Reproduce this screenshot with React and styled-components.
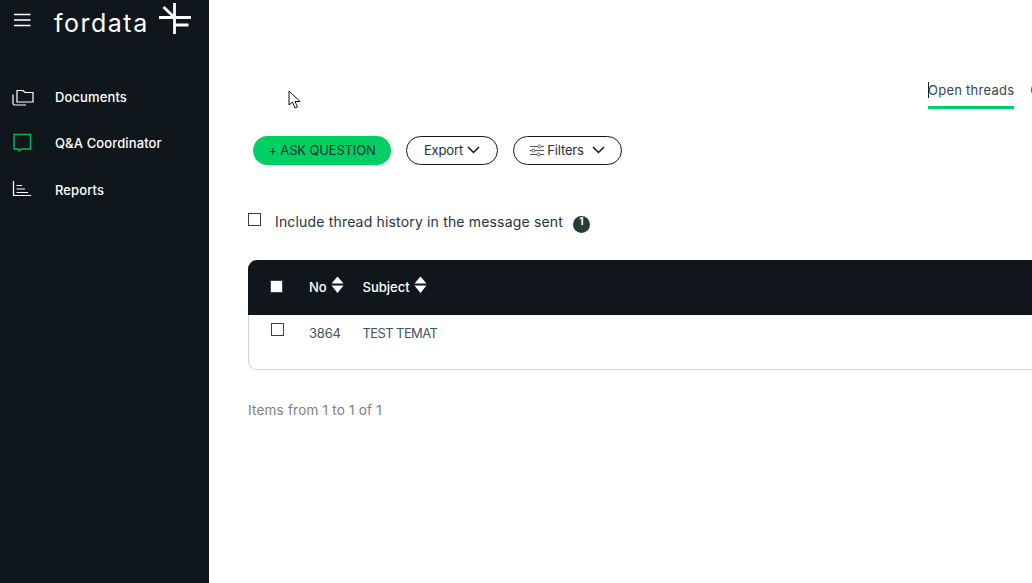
import React from 'react';
import styled, { createGlobalStyle } from 'styled-components';

const GlobalStyle = createGlobalStyle`
  html, body {
    margin: 0;
    padding: 0;
    height: 100%;
    overflow: hidden;
    background: #fff;
    font-family: Inter, "Liberation Sans", sans-serif;
  }
`;

const Page = styled.div`
  position: relative;
  display: flex;
  width: 1032px;
  height: 583px;
  overflow: hidden;
`;

const Sidebar = styled.aside`
  flex: 0 0 209px;
  background: #10171c;
  color: #fff;
`;

const Brand = styled.div`
  display: flex;
  align-items: center;
  height: 36px;
  padding: 4px 0 0 14px;
`;

const Burger = styled.svg`
  width: 17px;
  height: 14px;
  margin-top: -4px;
  margin-right: 23px;
`;

const LogoText = styled.span`
  width: 96px;
  margin-top: 2px;
  font-size: 25px;
  font-weight: 400;
  letter-spacing: 1.5px;
  line-height: 36px;
`;

const LogoMark = styled.svg`
  width: 32px;
  height: 32px;
  margin-left: 9px;
  margin-top: -8px;
`;

const Nav = styled.nav`
  display: flex;
  flex-direction: column;
  gap: 22.5px;
  padding-top: 44.7px;
`;

const NavItem = styled.a`
  display: flex;
  align-items: center;
  height: 24px;
  padding-left: 12px;
  font-size: 13px;
  font-weight: 500;
  letter-spacing: 0.12px;
  color: #fff;
`;

const NavIcon = styled.svg`
  width: 22px;
  height: 20px;
  margin-right: 21px;
  fill: none;
  stroke: ${props => props.$color || '#fff'};
  stroke-width: ${props => props.$stroke || 1.2};
`;

const Main = styled.main`
  flex: 1;
  min-width: 0;
  padding: 78px 0 0 39px;
  color: #1f2a30;
`;

const Tabs = styled.div`
  display: flex;
  gap: 16px;
  padding-left: 680px;
  white-space: nowrap;
`;

const Tab = styled.div`
  height: 31px;
  box-sizing: border-box;
  padding-top: 4px;
  font-size: 13px;
  letter-spacing: 0.25px;
  color: #33464f;
  border-bottom: ${props => (props.$active ? '3px solid #00cf63' : 'none')};
`;

const Caret = styled.span`
  position: absolute;
  left: 928px;
  top: 82px;
  width: 1px;
  height: 16px;
  background: #10262c;
`;

const Toolbar = styled.div`
  display: flex;
  align-items: center;
  gap: 15px;
  padding: 27px 0 0 5px;
`;

const AskButton = styled.button`
  width: 138px;
  height: 29px;
  border: 0;
  border-radius: 15px;
  padding: 0 0 2px;
  background: #00cf63;
  color: #14302a;
  font-family: inherit;
  font-size: 13px;
  letter-spacing: -0.15px;
`;

const OutlineButton = styled.button`
  display: flex;
  align-items: center;
  justify-content: center;
  gap: ${props => props.$gap || 4}px;
  width: ${props => props.$width}px;
  height: 29px;
  padding: 0 0 1px;
  border: 1px solid #10171c;
  border-radius: 15px;
  background: #fff;
  color: #22323a;
  font-family: inherit;
  font-size: 13px;
  letter-spacing: -0.15px;
`;

const FilterLabel = styled.span`
  display: flex;
  align-items: center;
  gap: 3px;
`;

const HistoryRow = styled.label`
  display: flex;
  align-items: center;
  height: 20px;
  margin-top: 46px;
  font-size: 14px;
  letter-spacing: 0.17px;
  color: #26343b;
`;

const Check = styled.span`
  display: block;
  flex: none;
  box-sizing: border-box;
  width: 13px;
  height: 13px;
  border: 1px solid #3a3f42;
  background: ${props => (props.$filled ? '#fff' : 'transparent')};
  margin-top: ${props => props.$top || 0}px;
`;

const HistoryLabel = styled.span`
  margin-left: 14px;
`;

const InfoDot = styled.span`
  display: flex;
  justify-content: center;
  width: 17px;
  height: 17px;
  margin: 6px 0 0 10px;
  border-radius: 50%;
  background: #233d39;
  color: #fff;
  font-size: 10px;
  font-weight: 700;
  line-height: 11px;
`;

const Table = styled.div`
  width: 900px;
  margin-top: 29px;
`;

const HeadRow = styled.div`
  display: flex;
  align-items: center;
  box-sizing: border-box;
  height: 55px;
  padding: 0 0 2px 22px;
  border-radius: 9px 9px 0 0;
  background: #10171c;
  color: #fff;
  font-size: 13px;
  font-weight: 500;
  letter-spacing: 0;
`;

const BodyRow = styled.div`
  display: flex;
  align-items: flex-start;
  box-sizing: border-box;
  height: 55px;
  padding: 8px 0 0 22px;
  border: 1px solid #cfd4d8;
  border-top: 0;
  border-radius: 0 0 9px 9px;
  font-size: 13px;
  letter-spacing: -0.2px;
  color: #45545c;
`;

const Cell = styled.div`
  display: flex;
  align-items: center;
  gap: 4px;
  width: ${props => props.$width}px;
  line-height: 20px;
  letter-spacing: ${props => props.$spacing || 'inherit'};
`;

const SortIcon = styled.svg`
  width: 13px;
  height: 18px;
  margin-top: -3px;
  fill: #fff;
`;

const Footer = styled.div`
  margin-top: 32px;
  font-size: 13.500px;
  letter-spacing: 0.2px;
  color: #808080;
`;

const Cursor = styled.svg`
  position: absolute;
  left: 288px;
  top: 90px;
  width: 14px;
  height: 20px;
`;

const Chevron = ({ size = 13 }) => (
  <svg width={size} height={size * 0.62} viewBox="0 0 13 8" fill="none" stroke="#10171c" strokeWidth="1.5">
    <path d="M1 1l5.500 5.500L12 1" />
  </svg>
);

const Sort = () => (
  <SortIcon viewBox="0 0 13 18">
    <path d="M6.500 0.500L12.500 7.500H.5zM.5 9.500h12L6.500 17z" />
  </SortIcon>
);

const App = () => (
  <Page>
    <GlobalStyle />
    <Sidebar>
      <Brand>
        <Burger viewBox="0 0 17 14" fill="none" stroke="#fff" strokeWidth="1.3">
          <path d="M0 1.500h16.500M0 7h16.500M0 12.500h16.500" />
        </Burger>
        <LogoText>fordata</LogoText>
        <LogoMark viewBox="0 0 32 32" fill="none" stroke="#fff" strokeWidth="2.800">
          <path d="M15.500 1v31M0 15.500h32M15.500 23h14M4.500 5l11 10.500" />
        </LogoMark>
      </Brand>
      <Nav>
        <NavItem>
          <NavIcon viewBox="0 0 22 20">
            <path d="M5 15V3.500h6l2 2h8V15H5z" />
            <path d="M1 7.500v9c0 1 .6 1.500 1.500 1.500H14" />
          </NavIcon>
          Documents
        </NavItem>
        <NavItem>
          <NavIcon viewBox="0 0 22 20" $color="#00b956" $stroke={1.4}>
            <path d="M2 1.500h16.500v14.500h-9l-2.500 2v-2H2z" strokeLinejoin="round" />
          </NavIcon>
          Q&amp;A Coordinator
        </NavItem>
        <NavItem>
          <NavIcon viewBox="0 0 22 20">
            <path d="M1.500 1v14.500H19" />
            <path d="M4.500 5.500H10M4.500 9H13M4.500 12.500H16" />
          </NavIcon>
          Reports
        </NavItem>
      </Nav>
    </Sidebar>
    <Main>
      <Tabs>
        <Tab $active>Open threads</Tab>
        <Tab>Closed threads</Tab>
      </Tabs>
      <Toolbar>
        <AskButton>+ ASK QUESTION</AskButton>
        <OutlineButton $width={92}>
          Export <Chevron />
        </OutlineButton>
        <OutlineButton $width={109} $gap={8}>
          <FilterLabel>
            <svg width="14" height="13" viewBox="0 0 14 13" fill="none" stroke="#555" strokeWidth="1">
              <path d="M0 2.500h8M11 2.500h3M0 6.500h2M5 6.500h9M0 10.500h7M10 10.500h4" />
              <circle cx="9.500" cy="2.500" r="1.500" />
              <circle cx="3.500" cy="6.500" r="1.500" />
              <circle cx="8.500" cy="10.500" r="1.500" />
            </svg>
            Filters
          </FilterLabel>
          <Chevron />
        </OutlineButton>
      </Toolbar>
      <HistoryRow>
        <Check $top={-4} />
        <HistoryLabel>Include thread history in the message sent</HistoryLabel>
        <InfoDot>1</InfoDot>
      </HistoryRow>
      <Table>
        <HeadRow>
          <Cell $width={39}>
            <Check $filled />
          </Cell>
          <Cell $width={53.500}>
            No <Sort />
          </Cell>
          <Cell $width={100}>
            Subject <Sort />
          </Cell>
        </HeadRow>
        <BodyRow>
          <Cell $width={38}>
            <Check />
          </Cell>
          <Cell $width={53.500}>3864</Cell>
          <Cell $width={200} $spacing="-0.6px">TEST TEMAT</Cell>
        </BodyRow>
      </Table>
      <Footer>Items from 1 to 1 of 1</Footer>
    </Main>
    <Caret />
    <Cursor viewBox="0 0 14 20" fill="#fff" stroke="#111" strokeWidth="1">
      <path d="M1 1v14l3.500-3 2.500 6 2.500-1-2.500-5.500h5z" />
    </Cursor>
  </Page>
);

export default App;
